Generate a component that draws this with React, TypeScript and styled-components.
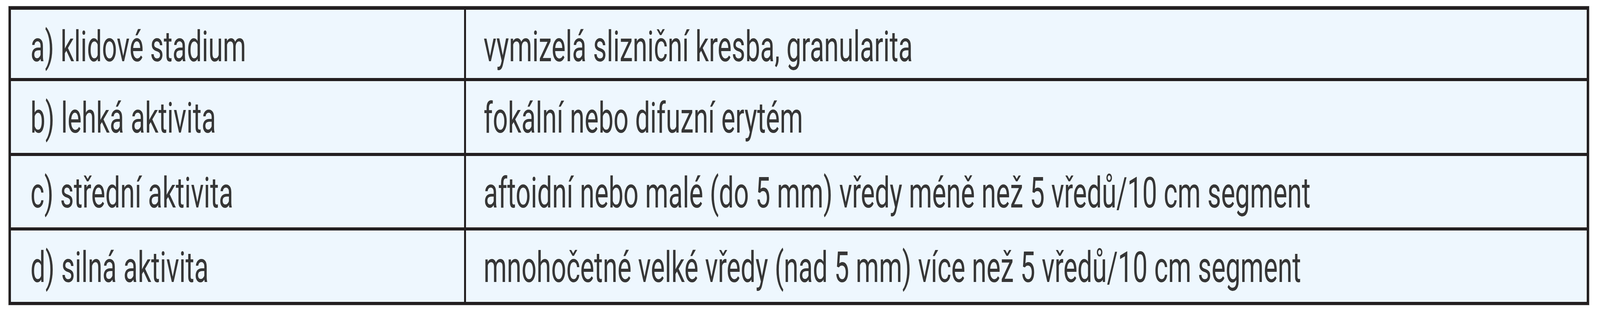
import { Fragment } from "react"
import styled, { createGlobalStyle } from "styled-components"

// the layout is drawn for a 6092px wide window; horizontal sizes are in vw
// so the table keeps its proportions if the window comes out narrower
const DESIGN_WIDTH = 6092

const GlobalStyle = createGlobalStyle`
  html, body {
    margin: 0;
    padding: 0;
    background: #ffffff;
    overflow: hidden;
  }
`

const Page = styled.div`
  padding: 16px 0.6894vw 16px 0.5417vw;
`

// dark grid background + gaps gives the ruled table lines
const Grid = styled.div`
  display: grid;
  box-sizing: border-box;
  grid-template-columns: minmax(0, 1725fr) minmax(0, 4267fr);
  grid-template-rows: 175px 184px 183px 183px;
  column-gap: 0.1313vw;
  row-gap: 8px;
  padding: 9px 0.1313vw 8px 0.1477vw;
  background: #231f20;
  box-shadow: 0 0 0 1px #b9b9b9;
`

const Cell = styled.div<{ $first?: boolean }>`
  background: #eef7fe;
  color: #363636;
  font-family: Roboto, "Liberation Sans", sans-serif;
  font-size: 110px;
  line-height: 1;
  white-space: nowrap;
  display: flex;
  align-items: flex-start;
  padding: 40px 0 0 ${(p) => (p.$first ? "1.2147vw" : "1.0834vw")};
  box-sizing: border-box;
  overflow: hidden;
  min-width: 0;
`

const Text = styled.span`
  display: inline-block;
  transform-origin: left center;
`

const rows: [string, string][] = [
  ["a) klidové stadium", "vymizelá slizniční kresba, granularita"],
  ["b) lehká aktivita", "fokální nebo difuzní erytém"],
  [
    "c) střední aktivita",
    "aftoidní nebo malé (do 5 mm) vředy méně než 5 vředů/10 cm segment",
  ],
  [
    "d) silná aktivita",
    "mnohočetné velké vředy (nad 5 mm) více než 5 vředů/10 cm segment",
  ],
]

export default function App() {
  const fit = typeof window !== "undefined" ? window.innerWidth / DESIGN_WIDTH : 1
  const squeeze = { transform: `scaleX(${0.917 * fit})` }

  return (
    <>
      <GlobalStyle />
      <Page>
        <Grid>
          {rows.map(([stage, desc]) => (
            <Fragment key={stage}>
              <Cell $first>
                <Text style={squeeze}>{stage}</Text>
              </Cell>
              <Cell>
                <Text style={squeeze}>{desc}</Text>
              </Cell>
            </Fragment>
          ))}
        </Grid>
      </Page>
    </>
  )
}
